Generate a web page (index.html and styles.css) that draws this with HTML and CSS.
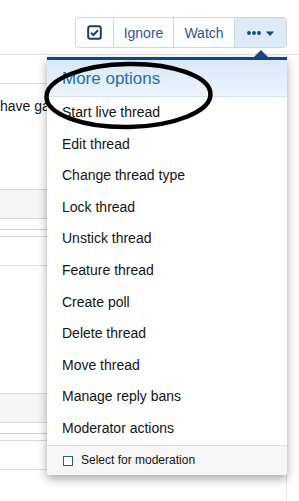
FILE: index.html
```html
<!DOCTYPE html>
<html>
<head>
<meta charset="utf-8">
<link rel="stylesheet" href="styles.css">
</head>
<body>
<div class="topbar">
  <div class="btn-group">
    <div class="seg seg-check">
      <svg width="15" height="15" viewBox="0 0 15 15"><rect x="1.2" y="1.2" width="12.6" height="12.6" rx="2" fill="none" stroke="#1d3c6e" stroke-width="2"/><path d="M4 7.6 L6.4 10 L11 5.2" fill="none" stroke="#1d3c6e" stroke-width="2"/></svg>
    </div>
    <div class="seg">Ignore</div>
    <div class="seg">Watch</div>
    <div class="seg seg-more">
      <svg width="28" height="8" viewBox="0 0 28 8"><circle cx="2" cy="4" r="1.9" fill="#16428a"/><circle cx="7" cy="4" r="1.9" fill="#16428a"/><circle cx="12" cy="4" r="1.9" fill="#16428a"/><path d="M19 2.5 L27 2.5 L23 7 Z" fill="#16428a"/></svg>
    </div>
  </div>
</div>
<div class="content">
  <div class="row1"></div>
  <div class="body-text">have gained</div>
  <div class="post">
    <div class="post-head"></div>
    <div class="post-lines"></div>
  </div>
  <div class="post post-last">
    <div class="post-head"></div>
    <div class="post-lines"></div>
  </div>
</div>

<div class="menu">
  <span class="menu-arrow"></span>
  <div class="menu-header">More options</div>
  <div class="menu-item">Start live thread</div>
  <div class="menu-item">Edit thread</div>
  <div class="menu-item">Change thread type</div>
  <div class="menu-item">Lock thread</div>
  <div class="menu-item">Unstick thread</div>
  <div class="menu-item">Feature thread</div>
  <div class="menu-item">Create poll</div>
  <div class="menu-item">Delete thread</div>
  <div class="menu-item">Move thread</div>
  <div class="menu-item">Manage reply bans</div>
  <div class="menu-item">Moderator actions</div>
  <div class="menu-footer"><span class="cb"></span>Select for moderation</div>
</div>

<svg class="annot" width="299" height="160" viewBox="0 0 299 160"><ellipse cx="128.5" cy="95.5" rx="82" ry="31.5" fill="none" stroke="#000" stroke-width="4.5" transform="rotate(-1 128.5 95.5)"/></svg>
</body>
</html>
```

FILE: styles.css
```css
html, body {
  margin: 0;
  padding: 0;
  background: #fff;
  font-family: "Liberation Sans", Arial, sans-serif;
  color: #141414;
  overflow: hidden;
}
body {
  width: 299px;
  height: 501px;
  position: relative;
}
.topbar {
  height: 55px;
  box-sizing: border-box;
  display: flex;
  justify-content: flex-end;
  align-items: flex-start;
  padding: 17px 12px 0 0;
  border-bottom: 1px solid #e3e3e3;
}
.btn-group {
  display: flex;
  height: 31px;
  box-sizing: border-box;
  border: 1px solid #d6d6d6;
  border-radius: 3px;
  overflow: hidden;
  font-size: 14px;
  color: #2a5995;
}
.seg {
  display: flex;
  align-items: center;
  justify-content: center;
  width: 60px;
  box-sizing: border-box;
  border-left: 1px solid #d6d6d6;
  background: #fff;
}
.seg-check {
  width: 37px;
  border-left: none;
}
.seg:nth-child(3) { width: 61px; }
.seg-more {
  width: 52px;
  background: #dce9f6;
  border-left-color: #cbd9e8;
}
.content {
  width: 287px;
  height: 446px;
  overflow: hidden;
  box-sizing: border-box;
  border-right: 1px solid #e3e3e3;
}
.row1 {
  height: 29px;
  box-sizing: border-box;
  border-bottom: 1px solid #e0e0e0;
}
.body-text {
  font-size: 14px;
  line-height: 20px;
  padding-top: 12px;
  height: 105px;
  box-sizing: border-box;
  white-space: nowrap;
}
.post {
  height: 204px;
}
.post-last {
  height: 108px;
}
.post-head {
  height: 30px;
  box-sizing: border-box;
  background: #f5f5f5;
  border-top: 1px solid #d8d8d8;
  border-bottom: 1px solid #d8d8d8;
}
.post-lines {
  margin-top: 10px;
  height: 37px;
  box-sizing: border-box;
  border-top: 1px solid #d0d0d0;
  border-bottom: 1px solid #e0e0e0;
  background: linear-gradient(#fff 6px, #d8d8d8 6px, #d8d8d8 7px, #fff 7px);
}
.menu {
  position: absolute;
  left: 47px;
  top: 57px;
  width: 240px;
  background: #fff;
  border-top: 3px solid #16428a;
  border-radius: 0 0 3px 3px;
  box-shadow: 0 4px 10px rgba(0, 0, 0, 0.35);
}
.menu-arrow {
  position: absolute;
  top: -10px;
  left: 207px;
  width: 0;
  height: 0;
  border-left: 7px solid transparent;
  border-right: 7px solid transparent;
  border-bottom: 7px solid #16428a;
}
.menu-header {
  padding: 7px 15px 6px;
  font-size: 17px;
  line-height: 23px;
  color: #2a6bb0;
  background: linear-gradient(#d9e9f8, #ecf4fc);
  border-bottom: 1px solid #d5e3f1;
}
.menu-item {
  padding: 6px 15px;
  font-size: 14px;
  line-height: 19.6px;
  color: #141414;
}
.menu-footer {
  display: flex;
  align-items: center;
  padding: 6px 15px;
  font-size: 12px;
  line-height: 17px;
  background: #f6f6f6;
  border-top: 1px solid #dedede;
  border-radius: 0 0 3px 3px;
}
.cb {
  width: 10px;
  height: 10px;
  box-sizing: border-box;
  border: 1px solid #2a5995;
  background: #fff;
  margin: 2px 8px 0 1px;
}
.annot {
  position: absolute;
  left: 0;
  top: 0;
  pointer-events: none;
}
```
